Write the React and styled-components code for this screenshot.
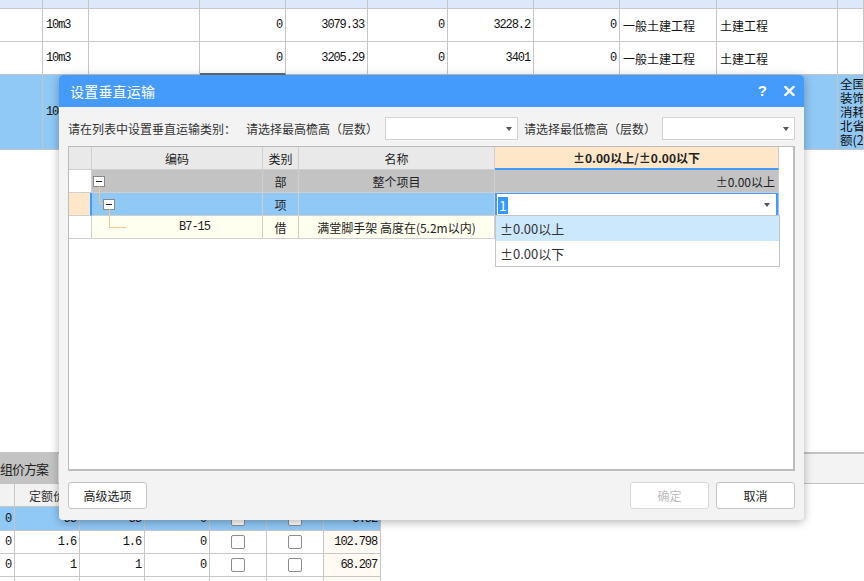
import React from 'react';
import styled, { createGlobalStyle } from 'styled-components';

const CJK = `"Noto Sans CJK SC", "Liberation Sans", sans-serif`;
const MONO = `"Liberation Mono", "DejaVu Sans Mono", monospace`;

const GlobalStyle = createGlobalStyle`
  html, body {
    margin: 0;
    padding: 0;
    background: #ffffff;
  }
  body {
    font-family: ${CJK};
    font-size: 12px;
    color: #222;
  }
  * {
    box-sizing: border-box;
  }
`;

// ---- background grids data ----

const topCols = '43px 46px 111px 86px 82px 80px 86px 86px 97px 121px 26px';
const topKinds = ['text', 'mono', 'text', 'num', 'num', 'num', 'num', 'num', 'text', 'text', 'wrap'];

const topRows = [
  { height: 9, bg: '#dde9fb', cells: ['', '', '', '', '', '', '', '', '', '', ''] },
  { height: 33, bg: '#ffffff', cells: ['', '10m3', '', '0', '3079.33', '0', '3228.2', '0', '一般土建工程', '土建工程', ''] },
  { height: 33, bg: '#ffffff', mark: 3, cells: ['', '10m3', '', '0', '3205.29', '0', '3401', '0', '一般土建工程', '土建工程', ''] },
  {
    height: 75,
    bg: '#90c8f6',
    cells: ['', '100m2', '', '0', '', '', '', '', '', '', ['全国统', '装饰装', '消耗量', '北省消', '额(20']],
  },
];

const bottomCols = '15px 65px 65px 65px 57px 57px 57px';
const bottomKinds = ['num', 'num', 'num', 'num', 'check', 'check', 'num'];

const bottomRows = [
  { height: 24, bg: '#90c8f6', cells: ['0', '55', '55', '0', true, true, '5.52'] },
  { height: 23, bg: '#ffffff', cells: ['0', '1.6', '1.6', '0', true, true, '102.798'] },
  { height: 23, bg: '#ffffff', cells: ['0', '1', '1', '0', true, true, '68.207'] },
  { height: 23, bg: '#ffffff', cells: ['', '', '', '', '', '', ''] },
];

// ---- component ----

function App() {
  return (
    <Page>
      <GlobalStyle />

      <Grid>
        {topRows.map((row, r) => (
          <GridRow key={r} cols={topCols} height={row.height} bg={row.bg}>
            {row.cells.map((c, i) => (
              <Cell key={i} kind={topKinds[i]} mark={row.mark === i}>
                {Array.isArray(c) ? c.map((line) => <div key={line}>{line}</div>) : c}
              </Cell>
            ))}
          </GridRow>
        ))}
      </Grid>

      <EmptyArea />

      <TabBar>
        <Tab>组价方案</Tab>
      </TabBar>

      <Grid>
        <GridRow cols={bottomCols} height={23} bg="#f2f2f2">
          <Cell kind="head"></Cell>
          <Cell kind="head">定额价</Cell>
          <Cell kind="head">市场价</Cell>
          <Cell kind="head">价差</Cell>
          <Cell kind="head">暂估</Cell>
          <Cell kind="head">锁定</Cell>
          <Cell kind="head">合价</Cell>
        </GridRow>
        {bottomRows.map((row, r) => (
          <GridRow key={r} cols={bottomCols} height={row.height} bg={row.bg}>
            {row.cells.map((c, i) => (
              <Cell key={i} kind={bottomKinds[i]} cream={i === 6 && r > 0}>
                {bottomKinds[i] === 'check' ? c && <CheckBox /> : c}
              </Cell>
            ))}
          </GridRow>
        ))}
      </Grid>

      <Dialog>
        <TitleBar>
          <Title>设置垂直运输</Title>
          <HelpIcon>?</HelpIcon>
          <svg width="11" height="10" viewBox="0 0 11 10">
            <path d="M1.5 1 L9.5 9 M9.5 1 L1.5 9" stroke="#ffffff" strokeWidth="2.4" strokeLinecap="square" />
          </svg>
        </TitleBar>

        <Toolbar>
          <Label width={178}>请在列表中设置垂直运输类别：</Label>
          <Label width={139}>请选择最高檐高（层数）</Label>
          <Combo>
            <Arrow />
          </Combo>
          <Label width={138} style={{ marginLeft: 6 }}>请选择最低檐高（层数）</Label>
          <Combo>
            <Arrow />
          </Combo>
        </Toolbar>

        <TableFrame>
          <TreeRow>
            <RowHead bg="#e9e9e9" />
            <TreeCell bg="#e9e9e9" align="center">编码</TreeCell>
            <TreeCell bg="#e9e9e9" align="center">类别</TreeCell>
            <TreeCell bg="#e9e9e9" align="center">名称</TreeCell>
            <TreeCell bg="#fee7c9" align="center" accent>±0.00以上/±0.00以下</TreeCell>
          </TreeRow>

          <TreeRow>
            <RowHead bg="#ffffff" />
            <TreeCell bg="#c3c3c3">
              <Toggle tail={7} style={{ marginLeft: 1 }} />
            </TreeCell>
            <TreeCell bg="#c3c3c3" align="center">部</TreeCell>
            <TreeCell bg="#c3c3c3" align="center">整个项目</TreeCell>
            <TreeCell bg="#c3c3c3" align="right">±0.00以上</TreeCell>
          </TreeRow>

          <TreeRow>
            <RowHead bg="#fee7c9" marker />
            <TreeCell bg="#90c8f6">
              <Elbow left={7} width={4} height={11} />
              <Toggle tail={7} />
            </TreeCell>
            <TreeCell bg="#90c8f6" align="center">项</TreeCell>
            <TreeCell bg="#90c8f6" />
            <TreeCell bg="#90c8f6" editor>
              <Editor>
                <Selected>1</Selected>
                <Arrow />
                <DropList>
                  <DropItem active>±0.00以上</DropItem>
                  <DropItem>±0.00以下</DropItem>
                </DropList>
              </Editor>
            </TreeCell>
          </TreeRow>

          <TreeRow>
            <RowHead bg="#ffffff" />
            <TreeCell bg="#fffff0">
              <Elbow left={17} width={17} height={12} />
              <Code>B7-15</Code>
            </TreeCell>
            <TreeCell bg="#fffff0" align="center">借</TreeCell>
            <TreeCell bg="#fffff0" align="center">满堂脚手架 高度在(5.2m以内)</TreeCell>
            <TreeCell bg="#fffff0" />
          </TreeRow>
        </TableFrame>

        <Footer>
          <Button>高级选项</Button>
          <Button disabled style={{ marginLeft: 'auto' }}>确定</Button>
          <Button>取消</Button>
        </Footer>
      </Dialog>
    </Page>
  );
}

export default App;

// ---- background ----

const Page = styled.div`
  position: relative;
  width: 864px;
  height: 581px;
  overflow: hidden;
  background: #ffffff;
  display: flex;
  flex-direction: column;
`;

const Grid = styled.div`
  display: flex;
  flex-direction: column;
  align-items: flex-start;
  flex: none;
`;

const GridRow = styled.div`
  display: grid;
  grid-template-columns: ${(p) => p.cols};
  width: max-content;
  height: ${(p) => p.height}px;
  background: ${(p) => p.bg};
  flex: none;
`;

const Cell = styled.div`
  border-right: 1px solid #c6c6c6;
  border-bottom: ${(p) => (p.mark ? '2px solid #6a6a6a' : '1px solid #c6c6c6')};
  background: ${(p) => (p.cream ? '#fffaf3' : 'transparent')};
  display: flex;
  align-items: center;
  overflow: hidden;
  white-space: nowrap;
  color: #111;
  padding: 0 3px;
  font-family: ${(p) => (p.kind === 'num' || p.kind === 'mono' ? MONO : CJK)};
  font-size: 12px;
  letter-spacing: ${(p) => (p.kind === 'num' || p.kind === 'mono' ? '-1.1px' : '0')};
  justify-content: ${(p) =>
    p.kind === 'num' ? 'flex-end' : p.kind === 'head' || p.kind === 'check' ? 'center' : 'flex-start'};

  ${(p) =>
    p.kind === 'wrap' &&
    `
    flex-direction: column;
    align-items: flex-start;
    justify-content: flex-start;
    padding: 2px 0 0 2px;
    font-size: 12.5px;
    line-height: 14px;
  `}
  ${(p) => p.kind === 'head' && `color: #333; font-size: 12px;`}
`;

const CheckBox = styled.span`
  width: 14px;
  height: 14px;
  border: 1px solid #8c8c8c;
  border-radius: 2px;
  background: #ffffff;
`;

const EmptyArea = styled.div`
  height: 302px;
  flex: none;
`;

const TabBar = styled.div`
  height: 32px;
  flex: none;
  background: #f3f3f3;
  border-top: 2px solid #c2c2c2;
  border-bottom: 1px solid #c2c2c2;
  display: flex;
`;

const Tab = styled.div`
  width: 58px;
  background: #c3c3c3;
  font-size: 13px;
  color: #222;
  display: flex;
  align-items: center;
  letter-spacing: -1px;
`;

// ---- dialog ----

const Dialog = styled.div`
  position: absolute;
  left: 59px;
  top: 75px;
  width: 745px;
  height: 445px;
  background: #f3f3f3;
  border-radius: 4px;
  box-shadow: 0 2px 10px rgba(0, 0, 0, 0.3);
  display: flex;
  flex-direction: column;
  overflow: hidden;
`;

const TitleBar = styled.div`
  height: 32px;
  flex: none;
  background: #459bfc;
  color: #ffffff;
  display: flex;
  align-items: center;
  padding: 0 9px 0 11px;
`;

const Title = styled.div`
  flex: 1;
  font-size: 14px;
  letter-spacing: 0.2px;
`;

const HelpIcon = styled.span`
  font-family: "Liberation Sans", sans-serif;
  font-weight: 700;
  font-size: 15px;
  margin-right: 17px;
  margin-top: -1px;
`;

const Toolbar = styled.div`
  display: flex;
  align-items: center;
  height: 23px;
  margin: 10px 9px 0;
  flex: none;
`;

const Label = styled.div`
  width: ${(p) => p.width}px;
  flex: none;
  color: #333;
  font-size: 12px;
  white-space: nowrap;
`;

const Combo = styled.div`
  width: 133px;
  height: 23px;
  flex: none;
  background: #ffffff;
  border: 1px solid #d2d2d2;
  display: flex;
  align-items: center;
  justify-content: flex-end;
  padding-right: 5px;
`;

const Arrow = styled.span`
  width: 0;
  height: 0;
  border-left: 3.5px solid transparent;
  border-right: 3.5px solid transparent;
  border-top: 4px solid #555;
`;

const TableFrame = styled.div`
  position: relative;
  margin: 6px 9px 0;
  height: 325px;
  flex: none;
  background: #ffffff;
  border: 1px solid #bcbcbc;
  border-right-width: 2px;
  border-bottom-width: 2px;
`;

const TreeRow = styled.div`
  display: grid;
  grid-template-columns: 23px 171px 36px 196px 284px;
  height: 23px;
`;

const RowHead = styled.div`
  background: ${(p) => p.bg};
  border-right: ${(p) => (p.marker ? '2px solid #4499fc' : '1px solid #cfcfcf')};
  border-bottom: 1px solid #cfcfcf;
`;

const TreeCell = styled.div`
  position: relative;
  background: ${(p) => p.bg || '#ffffff'};
  border-right: 1px solid ${(p) => (p.editor ? 'transparent' : '#cfcfcf')};
  border-bottom: ${(p) => (p.accent ? '2px solid #4499fc' : p.editor ? 'none' : '1px solid #cfcfcf')};
  display: flex;
  align-items: center;
  justify-content: ${(p) => (p.align === 'center' ? 'center' : p.align === 'right' ? 'flex-end' : 'flex-start')};
  padding: ${(p) => (p.align === 'right' ? '0 3px 0 0' : '0')};
  font-size: 12px;
  font-weight: ${(p) => (p.accent ? 700 : 400)};
  color: #222;
  white-space: nowrap;
`;

const Toggle = styled.span`
  position: relative;
  flex: none;
  width: 12px;
  height: 11px;
  border: 1px solid #888888;
  background: #ffffff;

  &::before {
    content: '';
    position: absolute;
    left: 2px;
    right: 2px;
    top: 4px;
    height: 1px;
    background: #222;
  }

  &::after {
    content: '';
    position: absolute;
    left: 5px;
    top: 100%;
    width: 1px;
    height: ${(p) => p.tail}px;
    background: #f5c68a;
  }
`;

const Elbow = styled.span`
  flex: none;
  align-self: flex-start;
  margin-left: ${(p) => p.left}px;
  width: ${(p) => p.width}px;
  height: ${(p) => p.height}px;
  border-left: 1px solid #f5c68a;
  border-bottom: 1px solid #f5c68a;
`;

const Code = styled.span`
  margin-left: 53px;
  font-family: ${MONO};
  letter-spacing: -1px;
  font-size: 12px;
`;

const Editor = styled.div`
  position: relative;
  width: 100%;
  height: 100%;
  background: #ffffff;
  border: 2px solid #4499fc;
  border-top-width: 1px;
  border-bottom: none;
  display: flex;
  align-items: center;
  justify-content: space-between;
  padding: 0 6px 0 1px;
`;

const Selected = styled.span`
  background: #3399ff;
  color: #ffffff;
  font-size: 14px;
  line-height: 17px;
  padding: 0 1px;
`;

const DropList = styled.div`
  position: absolute;
  left: -2px;
  top: calc(100% - 1px);
  width: 285px;
  background: #ffffff;
  border: 1px solid #c4c4c4;
  z-index: 2;
`;

const DropItem = styled.div`
  height: 25px;
  line-height: 25px;
  padding-left: 4px;
  font-size: 13px;
  color: #333;
  background: ${(p) => (p.active ? '#cce8fc' : '#ffffff')};
`;

const Footer = styled.div`
  display: flex;
  gap: 7px;
  margin: 11px 9px 0;
  flex: none;
`;

const Button = styled.button`
  width: 79px;
  height: 27px;
  background: #ffffff;
  border: 1px solid ${(p) => (p.disabled ? '#d8d8d8' : '#c4c4c4')};
  border-radius: 3px;
  color: ${(p) => (p.disabled ? '#bcbcbc' : '#222')};
  font-family: ${CJK};
  font-size: 12px;
  padding: 0;
`;
